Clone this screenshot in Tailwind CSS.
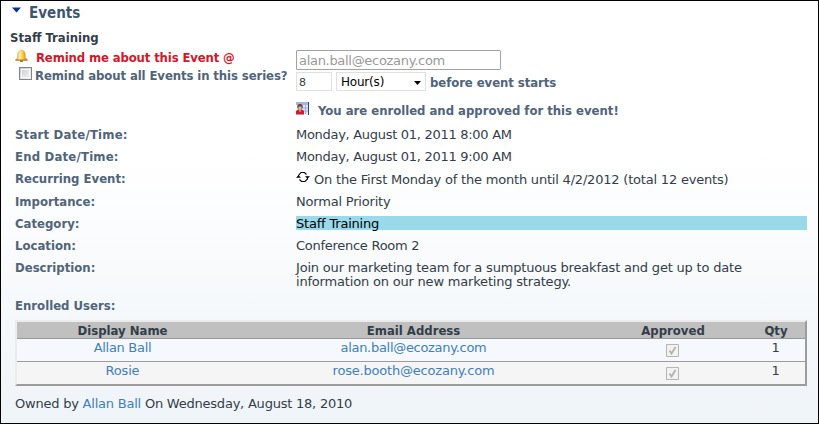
<!DOCTYPE html>
<html lang="en">
<head>
<meta charset="utf-8">
<title>Events</title>
<script src="https://cdn.jsdelivr.net/npm/@tailwindcss/browser@4"></script>
</head>
<body class="h-[424px] w-[819px] overflow-hidden border border-black bg-linear-to-b from-white from-35% to-[#eff4f8] font-['DejaVu_Sans',sans-serif] text-[13px] leading-[14px] text-[#333d49]">
<header class="flex h-[28px] items-start pl-[11px] pt-[3px]">
  <svg class="mt-[3px] h-[6px] w-[9px]" viewBox="0 0 9 6"><path d="M0 .5h9L4.5 5.5z" fill="#06309b"/></svg>
  <h1 class="ml-2 mt-px font-['DejaVu_Sans_Condensed','DejaVu_Sans',sans-serif] text-[15px] font-bold leading-4 text-[#3c5670]">Events</h1>
</header>
<main>
  <h2 class="h-[18px] pl-[9px] pt-[2px] font-['DejaVu_Sans_Condensed','DejaVu_Sans',sans-serif] font-bold">Staff Training</h2>

  <section class="flex h-[80px] font-['DejaVu_Sans_Condensed','DejaVu_Sans',sans-serif] font-bold text-[#50647a]">
    <div class="w-[295px] pt-[2px]">
      <div class="flex h-[18px] items-start pl-[14px]">
        <svg class="h-[14px] w-[13px]" viewBox="0 0 13 14">
          <defs><linearGradient id="bell" x2="1"><stop stop-color="#d9961e"/><stop offset=".35" stop-color="#fff0a0"/><stop offset=".65" stop-color="#f4c232"/><stop offset="1" stop-color="#bd7110"/></linearGradient></defs>
          <path d="M5.500 1.500q1-1.500 2 0c2 .5 2.800 2 2.800 4v3l2.200 2.500H.5L2.700 8.500v-3c0-2 .8-3.500 2.800-4z" fill="url(#bell)" stroke="#d79a35" stroke-width=".5"/>
          <path d="M.5 11.200h12" stroke="#a76410" stroke-width=".9"/><path d="M5 11.700h3v1H5z" fill="#70420d"/>
        </svg>
        <span class="ml-[8px] mt-[2px] tracking-[-0.14px] text-[#d0182c]">Remind me about this Event @</span>
      </div>
      <div class="flex items-start pl-[18px]">
        <span class="h-[13px] w-[13px] border border-[#858585] bg-linear-to-br from-[#c7cbd0] to-[#f7f7f7] p-px"><span class="block h-[9px] w-[9px] border border-white/80"></span></span>
        <span class="ml-[3px] mt-[2px] tracking-[-0.1px]">Remind about all Events in this series?</span>
      </div>
    </div>
    <div class="pt-[3px]">
      <div class="flex h-[20px] w-[205px] items-center rounded-[1px] border border-[#a2a2a2] bg-white pl-[2px] pt-[2px] font-['DejaVu_Sans',sans-serif] font-normal tracking-[-0.3px] text-[#999]">alan.ball@ecozany.com</div>
      <div class="mt-[2px] flex h-[19px] items-center">
        <div class="flex h-[19px] w-[36px] items-center border border-[#dfdfe6] bg-white pl-[2px] pt-[2px] font-['DejaVu_Sans',sans-serif] text-[11px] font-normal text-[#333d49]">8</div>
        <div class="ml-[4px] flex h-[19px] w-[90px] items-center justify-between border border-[#dfdfe6] bg-white pl-[4px] pr-[4px] font-['DejaVu_Sans',sans-serif] text-[12px] font-normal text-black"><span class="tracking-[-0.2px]">Hour(s)</span><svg class="mt-[2px] h-[4px] w-[7px]" viewBox="0 0 7 4"><path d="M0 0h7L3.500 4z"/></svg></div>
        <span class="ml-[4px] mt-[2px] tracking-[-0.07px]">before event starts</span>
      </div>
      <div class="mt-[11px] flex items-start">
        <svg class="h-[13px] w-[13px]" viewBox="0 0 13 13"><path d="M3 .5h10v12H3z" fill="#dfe6f7"/><path d="M0 0h13v3H0z" fill="#a9b5de"/><path d="M12 0h1v13h-1z" fill="#26458d"/><path d="M7 6h5M7 9h5M9.500 3v9" stroke="#8fa5d8" stroke-width=".8"/><path d="M0 12.500V9l2-1.500h4L8 9v3.500z" fill="#c5202e"/><circle cx="4" cy="4.800" r="2.800" fill="#5b4444"/><path d="M2.500 4.500h3v2.500L4 8.300 2.500 7z" fill="#e8b7a4"/><path d="M3 8.500l1 1.500 1-1.500z" fill="#eee"/></svg>
        <span class="ml-[9px] mt-[2px] tracking-[-0.02px]">You are enrolled and approved for this event!</span>
      </div>
    </div>
  </section>

  <dl class="grid w-[806px] grid-cols-[281px_1fr] grid-rows-[22px_22px_23px_22px_22px_22px_38px_22px] pl-[14px] [&_dt]:pt-px [&_dt]:font-['DejaVu_Sans_Condensed','DejaVu_Sans',sans-serif] [&_dt]:font-bold [&_dt]:text-[#50647a]">
    <dt class="tracking-[0.2px]">Start Date/Time:</dt><dd class="pt-px tracking-[-0.29px]">Monday, August 01, 2011 8:00 AM</dd>
    <dt class="tracking-[0.2px]">End Date/Time:</dt><dd class="pt-px tracking-[-0.29px]">Monday, August 01, 2011 9:00 AM</dd>
    <dt>Recurring Event:</dt>
    <dd class="flex tracking-[-0.2px]"><svg class="h-[13px] w-[14px]" viewBox="0 0 14 13" fill="none" stroke="#000" stroke-width="1.100"><path d="M2.500 6V4.500l2.500-3h3.500l2 2M11.500 5.500v2.500L9 10.500H5.500l-2-2"/><path d="M0 6.800h5L2.500 4.300zM9 5.200h5L11.500 7.700z" fill="#000" stroke="none"/></svg><span class="ml-[4px] mt-[2px]">On the First Monday of the month until 4/2/2012 (total 12 events)</span></dd>
    <dt>Importance:</dt><dd class="pt-px tracking-[-0.2px]">Normal Priority</dd>
    <dt>Category:</dt><dd class="h-[14px] w-[511px] bg-[#9ad9ea] pt-px tracking-[-0.2px] text-black">Staff Training</dd>
    <dt>Location:</dt><dd class="pt-px tracking-[-0.27px]">Conference Room 2</dd>
    <dt>Description:</dt><dd class="pt-px tracking-[-0.19px]">Join our marketing team for a sumptuous breakfast and get up to date<br>information on our new marketing strategy.</dd>
    <dt>Enrolled Users:</dt><dd></dd>
  </dl>

  <div class="ml-[14px] h-[66px] w-[792px] border-2 border-b-[#9c9c9c] border-l-[#ececec] border-r-[#9c9c9c] border-t-[#ececec] text-center">
    <div class="grid h-[17px] grid-cols-[211px_371px_148px_1fr] border-b border-[#989898] bg-[#c0c0c0] pt-[2px] font-['DejaVu_Sans_Condensed','DejaVu_Sans',sans-serif] font-bold">
      <span>Display Name</span><span>Email Address</span><span>Approved</span><span>Qty</span>
    </div>
    <div class="grid h-[23px] grid-cols-[211px_371px_148px_1fr] border-b border-[#9c9c9c] bg-[#f5f9fe] pt-[2px] tracking-[-0.3px]">
      <span class="text-[#3f80b9]">Allan Ball</span><span class="text-[#3f80b9]">alan.ball@ecozany.com</span>
      <span class="flex justify-center pr-px pt-[3px]"><svg class="h-[13px] w-[13px]" viewBox="0 0 13 13"><path d="M.5.5h12v12H.5z" fill="#f2f2f2" stroke="#b5b5b5"/><path d="M3.500 6.500L5.500 9.500L9.500 3" fill="none" stroke="#b3b3b3" stroke-width="1.800"/></svg></span><span class="pr-px">1</span>
    </div>
    <div class="grid h-[22px] grid-cols-[211px_371px_148px_1fr] bg-[#f5f5f5] pt-[2px] tracking-[-0.2px]">
      <span class="text-[#3f80b9]">Rosie</span><span class="text-[#3f80b9]">rose.booth@ecozany.com</span>
      <span class="flex justify-center pr-px pt-[3px]"><svg class="h-[13px] w-[13px]" viewBox="0 0 13 13"><path d="M.5.5h12v12H.5z" fill="#f2f2f2" stroke="#b5b5b5"/><path d="M3.500 6.500L5.500 9.500L9.500 3" fill="none" stroke="#b3b3b3" stroke-width="1.800"/></svg></span><span class="pr-px">1</span>
    </div>
  </div>
  <p class="pl-[14px] pt-[11px] tracking-[-0.22px]">Owned by <a class="text-[#3f80b9]">Allan Ball</a> On Wednesday, August 18, 2010</p>
</main>
</body>
</html>
